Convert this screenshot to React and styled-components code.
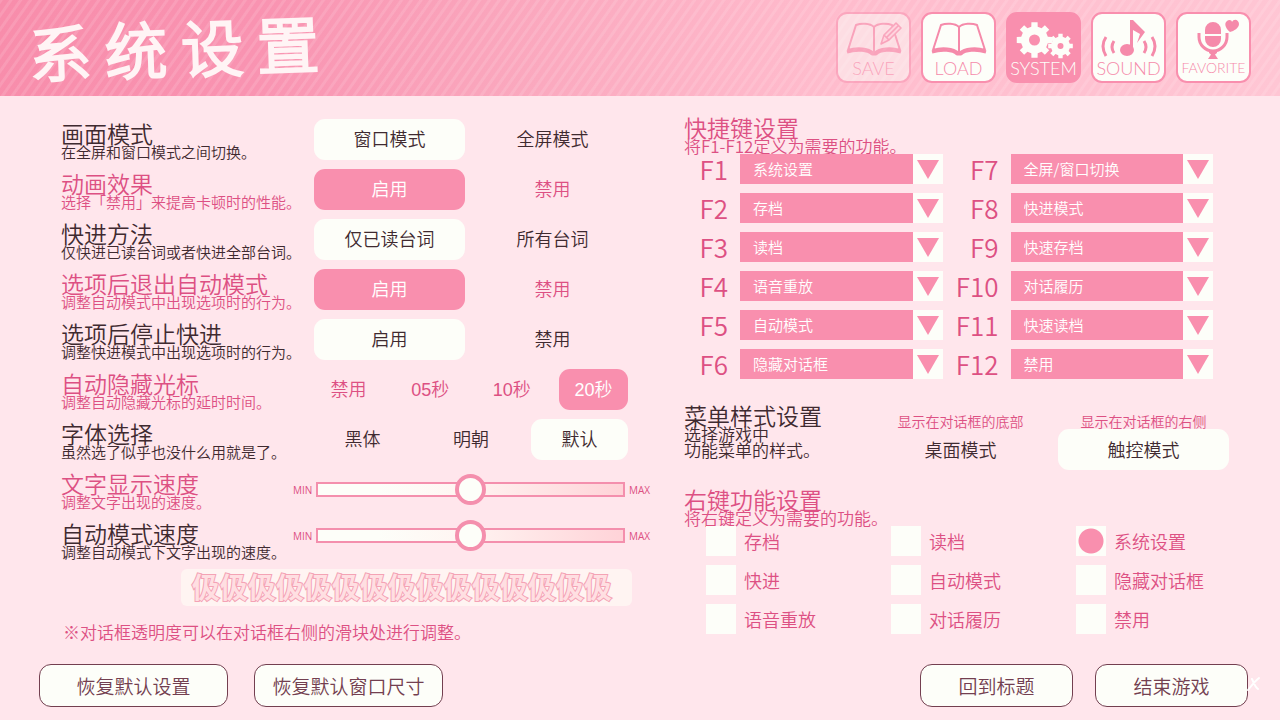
import React, { useState } from "react";
import styled, { createGlobalStyle } from "styled-components";

const color = {
  page: "#ffe6ec",
  pink: "#f98fae",
  rose: "#dd5083",
  ink: "#3f2a30",
  wine: "#733f50",
  cream: "#fdfef9",
};

const GlobalStyle = createGlobalStyle`
  *, *::before, *::after { box-sizing: border-box; }
  body {
    margin: 0;
    background: ${color.page};
    color: ${color.ink};
    font-family: "Noto Sans CJK SC", sans-serif;
    font-weight: 350;
  }
  button, select { font: inherit; color: inherit; }
  h1, h2, p { margin: 0; font-weight: inherit; }
`;

const Page = styled.div`
  min-height: 100vh;
  display: flex;
  flex-direction: column;
`;

const Header = styled.header`
  height: 96px;
  flex: none;
  display: flex;
  align-items: center;
  justify-content: space-between;
  padding: 0 29px 1px 29px;
  background:
    repeating-linear-gradient(125deg, rgba(255, 255, 255, 0.12) 0 2px, transparent 3px 7px, rgba(255, 255, 255, 0.12) 8px),
    linear-gradient(100deg, #f88dab 0%, #f993b1 20%, #faa5bc 38%, #ffbccd 65%, #ffc6d4 100%);
`;

const Title = styled.h1`
  display: flex;
  gap: 14px;
  padding-bottom: 4px;
  font-size: 62px;
  line-height: 88px;
  font-weight: 300;
  color: #fff4f5;
  -webkit-text-stroke: 3px #fff4f5;
  stroke-linejoin: round;
  transform: rotate(-2deg);
`;

const Tabs = styled.nav`
  display: flex;
  gap: 10px;
`;

const Tab = styled.button`
  width: 75px;
  height: 71px;
  padding: 3px 0 0;
  display: flex;
  flex-direction: column;
  align-items: center;
  border: 2px solid ${color.pink};
  border-radius: 11px;
  background: ${(p) => (p.$active ? color.pink : color.cream)};
  color: ${(p) => (p.$active ? color.cream : "#f58aaa")};
  opacity: ${(p) => (p.disabled ? 0.5 : 1)};
  font-family: Lato, sans-serif;
  font-weight: 300;
  font-size: ${(p) => (p.$small ? "14px" : "18px")};
  line-height: 18px;
  white-space: nowrap;
`;

const TabIcon = styled.svg`
  width: 60px;
  height: 42px;
  flex: none;
`;

const Main = styled.main`
  flex: 1;
  display: grid;
  grid-template-columns: minmax(0, 589fr) minmax(0, 545fr);
  gap: 34px;
  padding: 18px 51px 0 61px;
`;

const Settings = styled.div`
  display: grid;
  grid-template-columns: minmax(0, 232fr) minmax(0, 357fr);
`;

const Labels = styled.div`
  display: flex;
  flex-direction: column;
`;

const Label = styled.div`
  height: 50px;
  padding-top: 9px;
  white-space: nowrap;
  color: ${(p) => (p.$rose ? color.rose : color.ink)};
`;

const Name = styled.h2`
  font-size: 23px;
  line-height: 21px;
`;

const Hint = styled.p`
  font-size: ${(p) => (p.$large ? "17px" : "15px")};
  line-height: 16px;
`;

const Controls = styled.div`
  display: flex;
  flex-direction: column;
`;

const Segments = styled.div`
  height: 50px;
  padding: 0 22px 0 21px;
  display: flex;
  align-items: center;
  justify-content: space-between;
  gap: 10px;
`;

const Option = styled.button`
  flex: 0 1 ${(p) => p.$width || "151px"};
  height: 41px;
  padding: 2px 0 0;
  border: 0;
  border-radius: 11px;
  font-family: "Liberation Sans", "Noto Sans CJK SC", sans-serif;
  font-size: 18px;
  line-height: 24px;
  white-space: nowrap;
  background: ${(p) => (p.$on ? (p.$rose ? color.pink : color.cream) : "transparent")};
  color: ${(p) => (p.$rose ? (p.$on ? "#fff" : color.rose) : color.ink)};
`;

const Sliders = styled.div`
  display: flex;
  flex-direction: column;
  gap: 15px;
  padding-top: 10px;
`;

const SliderRow = styled.label`
  display: flex;
  align-items: center;
  justify-content: space-between;
  height: 31px;
  font-family: "Open Sans", sans-serif;
  font-weight: 400;
  font-size: 10px;
  color: ${color.rose};
`;

const Range = styled.input`
  flex: 1;
  min-width: 0;
  height: 31px;
  margin: 0 4px;
  appearance: none;
  background: transparent;
  &::-webkit-slider-runnable-track {
    height: 15px;
    border: 2px solid #f48fad;
    background: linear-gradient(90deg, ${color.cream} 20%, #fff6f3 45%, #ffd3d8 100%);
  }
  &::-webkit-slider-thumb {
    appearance: none;
    width: 31px;
    height: 31px;
    margin-top: -10px;
    border: 4px solid #f48fad;
    border-radius: 50%;
    background: ${color.cream};
  }
`;

const Preview = styled.p`
  margin: 5px 18px 0 120px;
  height: 37px;
  padding-left: 11px;
  border-radius: 6px;
  background: #fff4f2;
  white-space: nowrap;
  font-size: 28px;
  line-height: 34px;
  font-weight: 700;
  color: #ffdfe2;
  -webkit-text-stroke: 2px #f4a3b5;
  paint-order: stroke;
`;

const Note = styled.p`
  margin: 16px 0 0 2px;
  font-size: 17px;
  line-height: 20px;
  color: ${color.rose};
  white-space: nowrap;
`;

const RightColumn = styled.div`
  padding-top: 3px;
`;

const Section = styled.section`
  margin-top: ${(p) => p.$top || 0}px;
  color: ${(p) => (p.$dark ? color.ink : color.rose)};
  white-space: nowrap;
`;

const Hotkeys = styled.div`
  display: grid;
  grid-template-columns: 1fr 1fr;
  grid-template-rows: repeat(6, 30px);
  grid-auto-flow: column;
  gap: 9px 12px;
  padding-right: 16px;
`;

const Hotkey = styled.label`
  display: grid;
  grid-template-columns: 44px 1fr 30px;
  align-items: center;
  font-size: 26px;
  line-height: 30px;
`;

const KeyName = styled.span`
  grid-area: 1 / 1;
  text-align: right;
`;

const Select = styled.select`
  grid-area: 1 / 2 / 2 / 4;
  appearance: none;
  height: 30px;
  margin-left: 12px;
  padding: 0 30px 0 13px;
  border: 0;
  border-radius: 0;
  background: linear-gradient(to left, ${color.cream} 30px, ${color.pink} 30px);
  color: #fff;
  font-size: 15px;
`;

const Arrow = styled.svg`
  grid-area: 1 / 3;
  width: 30px;
  height: 30px;
  pointer-events: none;
`;

const MenuStyle = styled.div`
  display: grid;
  grid-template-columns: 191fr 354fr;
`;

const MenuChoices = styled.div`
  display: grid;
  grid-template-columns: 1fr 1fr;
  gap: 12px;
  padding-top: 8px;
`;

const Choice = styled.div`
  display: flex;
  flex-direction: column;
`;

const Caption = styled.label`
  font-size: 14px;
  line-height: 16px;
  text-align: center;
  color: ${color.rose};
`;

const Radios = styled.div`
  display: grid;
  grid-template-columns: 185fr 185fr 153fr;
  gap: 9px 0;
  padding-left: 22px;
`;

const RadioLabel = styled.label`
  display: flex;
  align-items: center;
  gap: 8px;
  font-size: 18px;
  line-height: 30px;
`;

const Radio = styled.input`
  appearance: none;
  width: 30px;
  height: 30px;
  margin: 0;
  background: ${color.cream};
  &:checked {
    background: radial-gradient(circle, ${color.pink} 12px, ${color.cream} 13px);
  }
`;

const Footer = styled.footer`
  position: relative;
  display: flex;
  justify-content: space-between;
  padding: 21px 32px 13px 39px;
`;

const FooterGroup = styled.div`
  display: flex;
  gap: ${(p) => p.$gap};
`;

const FooterButton = styled.button`
  width: ${(p) => p.$width};
  height: 43px;
  padding: 0;
  border: 1px solid ${color.wine};
  border-radius: 12px;
  background: ${color.cream};
  color: ${color.wine};
  font-size: 19px;
  line-height: 24px;
  white-space: nowrap;
`;

const Watermark = styled.svg`
  position: absolute;
  right: 19px;
  bottom: 28px;
  width: 14px;
  height: 16px;
  pointer-events: none;
`;

const Book = ({ pen }) => (
  <TabIcon viewBox="0 0 60 42" fill="none" stroke="currentColor" strokeLinejoin="round">
    <path strokeWidth="2" d="M30 10C26 6 17 6 12 8L4 33C13 30 24 31 30 36C36 31 47 30 56 33L48 8C43 6 34 6 30 10V35" />
    <path strokeWidth="3" d="M3 35C13 32 24 33 28 37H32C36 33 47 32 57 35" />
    {pen && (
      <path fill="#ffe6ec" strokeWidth="1.6" d="M37 27L40 18L52 6L57 11L45 23ZM40 18L45 23M43 20L54 9" />
    )}
  </TabIcon>
);

const gearPath = (cx, cy, r, teeth, hole) => {
  const step = (Math.PI * 2) / teeth;
  const at = (radius, angle) =>
    `${(cx + radius * Math.cos(angle)).toFixed(2)} ${(cy + radius * Math.sin(angle)).toFixed(2)}`;
  let d = "";
  for (let i = 0; i < teeth; i += 1) {
    const a = i * step;
    d += `${i ? "L" : "M"}${at(r * 0.76, a - step * 0.3)}L${at(r, a - step * 0.22)}L${at(r, a + step * 0.22)}L${at(r * 0.76, a + step * 0.3)}`;
  }
  return `${d}ZM${cx - hole} ${cy}a${hole} ${hole} 0 1 0 ${hole * 2} 0a${hole} ${hole} 0 1 0 ${-hole * 2} 0Z`;
};

const Gears = () => (
  <TabIcon viewBox="0 0 60 42" fill="currentColor" fillRule="evenodd">
    <path d={gearPath(20.5, 23, 18, 8, 5.5)} />
    <path d={gearPath(46.5, 29, 12.5, 8, 3)} />
  </TabIcon>
);

const MusicNote = () => (
  <TabIcon viewBox="0 0 60 42" fill="currentColor">
    <ellipse cx="28" cy="33" rx="7" ry="6" />
    <path d="M31 3H34L46 15L38 26L41 17L34 13V33H31Z" />
    <g fill="none" stroke="currentColor" strokeWidth="3">
      <path d="M7 20Q1 29 7 39M15 24Q11 30 15 36M53 20Q59 29 53 39M45 24Q49 30 45 36" />
    </g>
  </TabIcon>
);

const Mic = () => (
  <TabIcon viewBox="0 0 60 42" fill="currentColor">
    <path d="M21 17V13A8 8 0 0 1 37 13V17ZM21 19H37V22A8 8 0 0 1 21 22Z" />
    <path fill="none" stroke="currentColor" strokeWidth="3" d="M15 16V20A14 14 0 0 0 43 20V16" />
    <path d="M25 33H33V36L31 37.500L34 42H24L27 37.500L25 36Z" />
    <path d="M46 15C41 11 40 6 43 4C45 2 48 3 48 5C50 1 55 3 55 7C55 11 50 14 46 15Z" />
  </TabIcon>
);

const tabs = [
  { name: "SAVE", icon: <Book pen />, disabled: true },
  { name: "LOAD", icon: <Book /> },
  { name: "SYSTEM", icon: <Gears />, active: true },
  { name: "SOUND", icon: <MusicNote /> },
  { name: "FAVORITE", icon: <Mic />, small: true },
];

const rows = [
  { name: "画面模式", hint: "在全屏和窗口模式之间切换。", options: ["窗口模式", "全屏模式"], on: 0 },
  { name: "动画效果", hint: "选择「禁用」来提高卡顿时的性能。", options: ["启用", "禁用"], on: 0 },
  { name: "快进方法", hint: "仅快进已读台词或者快进全部台词。", options: ["仅已读台词", "所有台词"], on: 0 },
  { name: "选项后退出自动模式", hint: "调整自动模式中出现选项时的行为。", options: ["启用", "禁用"], on: 0 },
  { name: "选项后停止快进", hint: "调整快进模式中出现选项时的行为。", options: ["启用", "禁用"], on: 0 },
  { name: "自动隐藏光标", hint: "调整自动隐藏光标的延时时间。", options: ["禁用", "05秒", "10秒", "20秒"], on: 3, width: "69px" },
  { name: "字体选择", hint: "虽然选了似乎也没什么用就是了。", options: ["黑体", "明朝", "默认"], on: 2, width: "97px" },
  { name: "文字显示速度", hint: "调整文字出现的速度。" },
  { name: "自动模式速度", hint: "调整自动模式下文字出现的速度。" },
];

const actions = [
  "系统设置", "存档", "读档", "语音重放", "自动模式", "隐藏对话框",
  "全屏/窗口切换", "快进模式", "快速存档", "对话履历", "快速读档", "禁用",
];

const rightClick = ["存档", "读档", "系统设置", "快进", "自动模式", "隐藏对话框", "语音重放", "对话履历", "禁用"];

function SegmentRow({ row, index }) {
  const [on, setOn] = useState(row.on);
  return (
    <Segments role="group" aria-labelledby={`setting-${index}`}>
      {row.options.map((text, i) => (
        <Option
          key={text}
          type="button"
          aria-pressed={on === i}
          $on={on === i}
          $rose={index % 2 === 1}
          $width={row.width}
          onClick={() => setOn(i)}
        >
          {text}
        </Option>
      ))}
    </Segments>
  );
}

export default function App() {
  const [menu, setMenu] = useState(1);
  return (
    <Page>
      <GlobalStyle />
      <Header>
        <Title>
          {[..."系统设置"].map((c) => (
            <span key={c}>{c}</span>
          ))}
        </Title>
        <Tabs>
          {tabs.map((t) => (
            <Tab key={t.name} type="button" disabled={t.disabled} $active={t.active} $small={t.small}>
              {t.icon}
              {t.name}
            </Tab>
          ))}
        </Tabs>
      </Header>

      <Main>
        <div>
          <Settings>
            <Labels>
              {rows.map((row, i) => (
                <Label key={row.name} $rose={i % 2 === 1}>
                  <Name id={`setting-${i}`}>{row.name}</Name>
                  <Hint>{row.hint}</Hint>
                </Label>
              ))}
            </Labels>
            <Controls>
              {rows.map((row, i) => row.options && <SegmentRow key={row.name} row={row} index={i} />)}
              <Sliders>
                {[7, 8].map((i) => (
                  <SliderRow key={i}>
                    MIN
                    <Range type="range" min="0" max="100" defaultValue="50" aria-labelledby={`setting-${i}`} />
                    MAX
                  </SliderRow>
                ))}
              </Sliders>
            </Controls>
          </Settings>
          <Preview>{"伋".repeat(15)}</Preview>
          <Note>※对话框透明度可以在对话框右侧的滑块处进行调整。</Note>
        </div>

        <RightColumn>
          <Section>
            <Name>快捷键设置</Name>
            <Hint $large>将F1-F12定义为需要的功能。</Hint>
            <Hotkeys>
              {actions.map((action, i) => (
                <Hotkey key={action}>
                  <KeyName>F{i + 1}</KeyName>
                  <Select defaultValue={action}>
                    {actions.map((a) => (
                      <option key={a}>{a}</option>
                    ))}
                  </Select>
                  <Arrow viewBox="0 0 30 30" aria-hidden="true">
                    <path fill={color.pink} d="M4 6H26L15 25Z" />
                  </Arrow>
                </Hotkey>
              ))}
            </Hotkeys>
          </Section>

          <Section $dark $top={26}>
            <MenuStyle>
              <div>
                <Name>菜单样式设置</Name>
                <Hint $large>选择游戏中</Hint>
                <Hint $large>功能菜单的样式。</Hint>
              </div>
              <MenuChoices>
                {[
                  ["显示在对话框的底部", "桌面模式"],
                  ["显示在对话框的右侧", "触控模式"],
                ].map(([caption, text], i) => (
                  <Choice key={text}>
                    <Caption htmlFor={`menu-${i}`}>{caption}</Caption>
                    <Option
                      id={`menu-${i}`}
                      type="button"
                      $width="41px"
                      $on={menu === i}
                      aria-pressed={menu === i}
                      onClick={() => setMenu(i)}
                    >
                      {text}
                    </Option>
                  </Choice>
                ))}
              </MenuChoices>
            </MenuStyle>
          </Section>

          <Section $top={19}>
            <Name>右键功能设置</Name>
            <Hint $large>将右键定义为需要的功能。</Hint>
            <Radios>
              {rightClick.map((text) => (
                <RadioLabel key={text}>
                  <Radio type="radio" name="right-click" defaultChecked={text === "系统设置"} />
                  {text}
                </RadioLabel>
              ))}
            </Radios>
          </Section>
        </RightColumn>
      </Main>

      <Footer>
        <FooterGroup $gap="26px">
          <FooterButton type="button" $width="189px">恢复默认设置</FooterButton>
          <FooterButton type="button" $width="189px">恢复默认窗口尺寸</FooterButton>
        </FooterGroup>
        <FooterGroup $gap="22px">
          <FooterButton type="button" $width="153px">回到标题</FooterButton>
          <FooterButton type="button" $width="153px">结束游戏</FooterButton>
        </FooterGroup>
        <Watermark viewBox="0 0 14 16" fill="none" stroke="#fff" strokeWidth="2" strokeLinecap="round" aria-hidden="true">
          <path d="M12 2C8 5 5 9 1 14M5 3C7 7 8 11 11 13" />
        </Watermark>
      </Footer>
    </Page>
  );
}
